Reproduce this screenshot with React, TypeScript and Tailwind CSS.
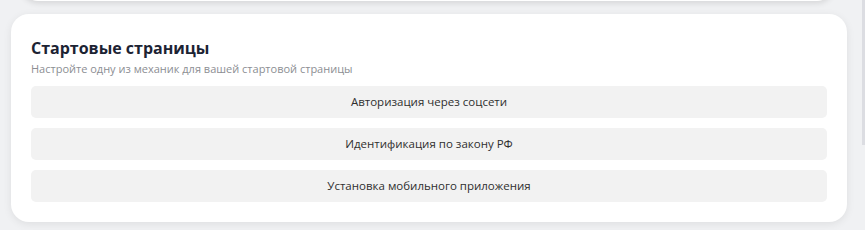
const items = [
  'Авторизация через соцсети',
  'Идентификация по закону РФ',
  'Установка мобильного приложения',
]

export default function App() {
  return (
    <div
      className="relative h-[230px] w-[865px] overflow-hidden bg-[#f0f1f3]"
      style={{ fontFamily: '"Open Sans", "Noto Sans", sans-serif' }}
    >
      {/* previous card, scrolled off */}
      <div className="mx-[22px] mr-[32px] -mt-[40px] h-[41px] rounded-b-2xl bg-white shadow-[0_2px_6px_rgba(0,0,0,0.12)]" />

      <section className="mt-[13px] ml-[11px] w-[836px] rounded-[18px] bg-white px-5 pt-[22px] pb-5 shadow-[0_2px_8px_rgba(0,0,0,0.08)]">
        <h2 className="text-[16px] font-bold leading-6 text-[#1c2333]">Стартовые страницы</h2>
        <p className="mt-px text-[11px] leading-4 text-[#8c8e93]">
          Настройте одну из механик для вашей стартовой страницы
        </p>

        <div className="mt-[9px] flex flex-col gap-[10px]">
          {items.map((label) => (
            <button
              key={label}
              className="flex h-8 items-center justify-center rounded-[5px] bg-[#f2f2f2] text-[11.5px] text-[#2f2f2f]"
            >
              {label}
            </button>
          ))}
        </div>
      </section>

      {/* scrollbar thumb */}
      <div className="absolute right-0 top-0 h-[145px] w-[3px] bg-[#dcdde2]" />
    </div>
  )
}
